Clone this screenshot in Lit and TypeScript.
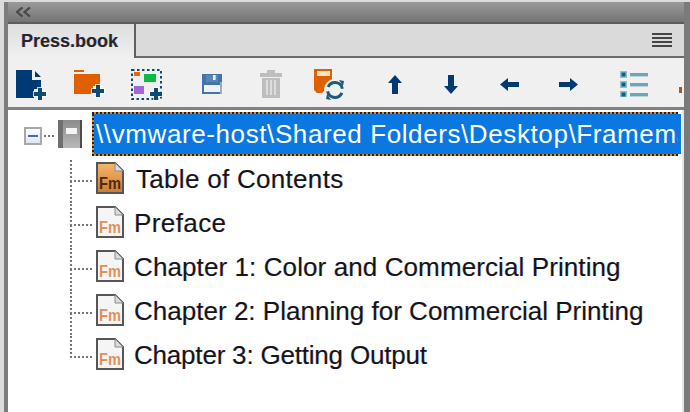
import { LitElement, html, css, svg } from 'lit';
import { customElement } from 'lit/decorators.js';

const NAVY = '#003a75';
const TEAL_NAVY = '#0d4a76';

const plus = (x: number, y: number) => svg`
  <path d="M${x} ${y - 7}v14M${x - 7} ${y}h14" stroke="#fff" stroke-width="6" opacity=".75" />
  <path d="M${x} ${y - 6}v12M${x - 6} ${y}h12" stroke=${TEAL_NAVY} stroke-width="4" />
`;

const toolIcons = [
  html`<svg width="31" height="31" viewBox="0 0 31 31">
    <path d="M0 1H16V11H25V20H18V29H0Z" fill=${NAVY} />
    <path d="M19 2L25 8H19Z" fill=${NAVY} />
    ${plus(24, 25)}
  </svg>`,
  html`<svg width="31" height="30" viewBox="0 0 31 30">
    <rect x="0" y="1" width="10" height="2" fill="#e06000" />
    <path d="M0 5H26V17H19V25H0Z" fill="#e06000" />
    ${plus(24, 22)}
  </svg>`,
  html`<svg width="34" height="33" viewBox="0 0 34 33">
    <rect x="2" y="2" width="29" height="29" fill="none" stroke=${TEAL_NAVY} stroke-width="2" stroke-dasharray="2.5 2.5" />
    <rect x="4" y="4" width="6" height="4" fill="#f0650e" />
    <rect x="14" y="6" width="12" height="8" fill="#0cbb3f" />
    <rect x="4" y="18" width="10" height="8" fill="#a565d6" />
    ${plus(26, 26)}
  </svg>`,
  html`<svg width="20" height="20" viewBox="0 0 20 20">
    <path d="M0 0H20V20H0Z" fill="#4273aa" />
    <path d="M2 11H18V18H2Z" fill="#eef1f5" />
    <path d="M4 1V8H16V1Z" fill="#6e95bd" opacity=".55" />
    <rect x="11" y="1" width="2.6" height="5" fill="#f0f0f1" />
    <rect x="18" y="8" width="2" height="12" fill="#8fb0d0" />
  </svg>`,
  html`<svg width="22" height="28" viewBox="0 0 22 28">
    <rect x="7" y="0" width="8" height="3" fill="#bebebe" />
    <rect x="0" y="3" width="22" height="4" fill="#bebebe" />
    <path d="M2 8H20V28H2Z" fill="#bebebe" />
    <path d="M7 10v15M11 10v15M15 10v15" stroke="#e8e8e8" stroke-width="1.5" />
  </svg>`,
  html`<svg width="31" height="31" viewBox="0 0 31 31">
    <path d="M0 0H18V15L8 24H3L0 21Z" fill="#e06000" />
    <path d="M3 2H16V7H3Z" fill="#fbe3cc" />
    <circle cx="21" cy="21" r="11" fill="#f0f0f1" />
    <circle cx="21" cy="21" r="7.5" fill="none" stroke="#1c5c7a" stroke-width="3" stroke-dasharray="19 4.5" stroke-dashoffset="-3" />
    <path d="M25 11L30 12L29 17ZM17 31L12 30L13 25Z" fill="#1c5c7a" />
  </svg>`,
  html`<svg width="16" height="19" viewBox="0 0 16 19">
    <path d="M8 0L15 8H11V19H5V8H1Z" fill=${NAVY} />
  </svg>`,
  html`<svg width="16" height="19" viewBox="0 0 16 19">
    <path d="M8 19L15 11H11V0H5V11H1Z" fill=${NAVY} />
  </svg>`,
  html`<svg width="19" height="15" viewBox="0 0 19 15">
    <path d="M0 7.5L8 1V5H19V10H8V14Z" fill=${NAVY} />
  </svg>`,
  html`<svg width="19" height="15" viewBox="0 0 19 15">
    <path d="M19 7.5L11 1V5H0V10H11V14Z" fill=${NAVY} />
  </svg>`,
  html`<svg width="28" height="26" viewBox="0 0 28 26">
    ${[3, 13, 23].map(
      (y) => svg`
        <rect x="0" y=${y - 3} width="7" height="7" fill="#8fc0cf" />
        <rect x="1.5" y=${y - 1.5} width="4" height="4" fill="#0b6484" />
        <rect x="10" y=${y - 1} width="18" height="3.4" fill="#6ea6b6" />
      `
    )}
  </svg>`,
  html`<svg class="stray" width="3" height="6" viewBox="0 0 3 6"><rect width="3" height="6" fill="#a85a1c" /></svg>`,
];

const bookIcon = html`<svg width="24" height="28" viewBox="0 0 24 28">
  <defs>
    <linearGradient id="book" x1="0" x2="0" y1="0" y2="1">
      <stop offset="0" stop-color="#8b8b8b" />
      <stop offset="1" stop-color="#b9b9b9" />
    </linearGradient>
  </defs>
  <rect width="24" height="28" rx="1" fill="url(#book)" />
  <rect width="5" height="28" fill="#6f6f6f" />
  <rect x="22" width="2" height="28" fill="#4c4c4c" />
  <rect x="8" y="8" width="11" height="6" fill="#f4f4f4" />
</svg>`;

const fileIcon = (hot: boolean) => html`<svg class="file" width="28" height="32" viewBox="0 0 28 32">
  <defs>
    <linearGradient id="hot" x1="0" x2="0" y1="0" y2="1">
      <stop offset="0" stop-color="#f6b76c" />
      <stop offset="1" stop-color="#d07a33" />
    </linearGradient>
  </defs>
  <path d="M1 1H19L27 9V31H1Z" fill=${hot ? 'url(#hot)' : '#f5f5f5'} stroke="#565656" stroke-width="2" />
  <path d="M19 1V9H27Z" fill="#dcdcdc" stroke="#8a8a8a" stroke-width="1" />
  <text x="14" y="27" text-anchor="middle" font-family="Liberation Sans, sans-serif" font-weight="700"
    font-size="17" textLength="22" lengthAdjust="spacingAndGlyphs"
    fill=${hot ? '#4a2c10' : '#e4905a'}>Fm</text>
</svg>`;

const chapters = [
  { name: 'Table of Contents', hot: true, spacing: 0.3, indent: 2 },
  { name: 'Preface', hot: false, spacing: 0.4, indent: 0 },
  { name: 'Chapter 1: Color and Commercial Printing', hot: false, spacing: 0.1, indent: 0 },
  { name: 'Chapter 2: Planning for Commercial Printing', hot: false, spacing: 0.02, indent: 0 },
  { name: 'Chapter 3: Getting Output', hot: false, spacing: -0.2, indent: 0 },
];

@customElement('app-root')
export class AppRoot extends LitElement {
  static styles = css`
    :host {
      display: block;
      width: 690px;
      height: 412px;
      overflow: hidden;
      background: #dcdcdc;
      padding: 2px 0 0 4px;
      box-sizing: border-box;
      font-family: 'Liberation Sans', Arial, sans-serif;
      color: #111;
    }

    .panel {
      height: 410px;
      display: flex;
      flex-direction: column;
      border-left: 4px solid #7c7c7c;
      border-right: 6px solid #7a7a7a;
      box-sizing: border-box;
    }

    .dock {
      flex: none;
      height: 22px;
      box-sizing: border-box;
      background: linear-gradient(#9a9a9a, #747474);
      border-bottom: 2px solid #5c5c5c;
      display: flex;
      align-items: center;
      padding-left: 8px;
    }

    .tabs {
      flex: none;
      height: 34px;
      display: flex;
      background: #dadada;
      border-bottom: 2px solid #6a6a6a;
      box-sizing: border-box;
      justify-content: space-between;
      align-items: stretch;
    }

    .tab {
      width: 128px;
      margin-bottom: -2px;
      background: linear-gradient(#dedede, #f0f0f1);
      border-right: 2px solid #5f5f5f;
      box-sizing: border-box;
      font-size: 18px;
      font-weight: 700;
      color: #24262b;
      padding: 7px 0 0 13px;
      text-shadow: -0.5px 0 rgba(230, 120, 0, 0.3), 0.5px 0 rgba(0, 110, 255, 0.3);
    }

    .menu {
      display: flex;
      align-items: center;
      padding-right: 12px;
    }

    .toolbar {
      flex: none;
      height: 52px;
      padding-top: 3px;
      background: #f0f0f1;
      border-bottom: 3px solid #808080;
      box-sizing: border-box;
      display: grid;
      grid-template-columns: 46px 70px 46px 84px 34px 82px 49px 63px 54px 65px 66px 26px;
      justify-items: center;
      align-items: center;
    }

    .toolbar svg {
      display: block;
    }

    .toolbar .stray {
      margin-top: 12px;
    }

    .tree {
      flex: 1;
      min-height: 0;
      background: #fff;
      margin-right: 2px;
      padding: 2px 1px 0 0;
      box-shadow: 2px 0 0 #e6e6e6;
    }

    .root {
      display: flex;
      align-items: center;
      height: 44px;
      padding-left: 16px;
    }

    .toggle {
      width: 18px;
      height: 18px;
      box-sizing: border-box;
      border: 2px solid #a8a8a8;
      background: linear-gradient(#fff, #dfe4ee);
      display: flex;
      align-items: center;
      justify-content: center;
      margin-top: 4px;
    }

    .toggle span {
      width: 10px;
      height: 2px;
      background: #4a6aa5;
    }

    .stub {
      width: 12px;
      height: 2px;
      margin: 4px 2px 0 2px;
      background: repeating-linear-gradient(90deg, #777 0 2px, transparent 2px 4px);
    }

    .label {
      flex: 1;
      min-width: 0;
      height: 44px;
      margin-left: 10px;
      box-sizing: border-box;
      padding: 2px 3px 2px 4px;
      background:
        repeating-linear-gradient(90deg, #222 0 2px, #e08a20 2px 4px) left top / calc(100% - 3px) 2px no-repeat,
        repeating-linear-gradient(90deg, #222 0 2px, #e08a20 2px 4px) left bottom / calc(100% - 3px) 2px no-repeat,
        repeating-linear-gradient(0deg, #222 0 2px, #e08a20 2px 4px) left top / 2px 100% no-repeat,
        linear-gradient(#0a78e0, #0a78e0) right center / 100% 40px no-repeat;
      color: #fff;
      font-size: 26px;
      line-height: 40px;
      letter-spacing: 0.6px;
      white-space: nowrap;
    }

    .label span {
      display: block;
      overflow: hidden;
    }

    .children {
      margin: 3px 0 0 62px;
    }

    .row {
      display: flex;
      height: 44px;
    }

    .branch {
      flex: none;
      width: 24px;
      display: flex;
      flex-direction: column;
    }

    .branch .up {
      height: 23px;
      flex: none;
      background:
        repeating-linear-gradient(90deg, #777 0 2px, transparent 2px 4px) left bottom / 22px 2px no-repeat,
        repeating-linear-gradient(0deg, #777 0 2px, transparent 2px 4px) left top / 2px 100% no-repeat;
    }

    .branch .down {
      flex: 1;
      background: repeating-linear-gradient(0deg, #777 0 2px, transparent 2px 4px) left top / 2px 100% no-repeat;
    }

    .row:last-child .down {
      background: none;
    }

    .file {
      display: block;
      flex: none;
      margin: 3px 10px 0 2px;
    }

    .name {
      font-size: 26px;
      line-height: 40px;
      white-space: nowrap;
      color: #14141c;
      text-shadow: -0.5px 0 rgba(230, 120, 0, 0.3), 0.5px 0 rgba(0, 110, 255, 0.3);
    }
  `;

  render() {
    return html`
      <div class="panel">
        <div class="dock">
          <svg width="15" height="10" viewBox="0 0 15 10">
            <path d="M6.5 0.5L1 5L6.5 9.5M14 0.5L8.5 5L14 9.5" fill="none" stroke="#474747" stroke-width="2.2" />
          </svg>
        </div>
        <div class="tabs">
          <div class="tab">Press.book</div>
          <div class="menu">
            <svg width="20" height="14" viewBox="0 0 20 14">
              <path d="M0 1h20M0 5h20M0 9h20M0 13h20" stroke="#444" stroke-width="2" />
            </svg>
          </div>
        </div>
        <div class="toolbar">${toolIcons}</div>
        <div class="tree">
          <div class="root">
            <div class="toggle"><span></span></div>
            <div class="stub"></div>
            ${bookIcon}
            <div class="label"><span>\\\\vmware-host\\Shared Folders\\Desktop\\Framemaker\\Press.book</span></div>
          </div>
          <div class="children">
            ${chapters.map(
              (c) => html`
                <div class="row">
                  <div class="branch"><div class="up"></div><div class="down"></div></div>
                  ${fileIcon(c.hot)}
                  <span class="name" style="letter-spacing:${c.spacing}px;margin-left:${c.indent}px">${c.name}</span>
                </div>
              `
            )}
          </div>
        </div>
      </div>
    `;
  }
}
